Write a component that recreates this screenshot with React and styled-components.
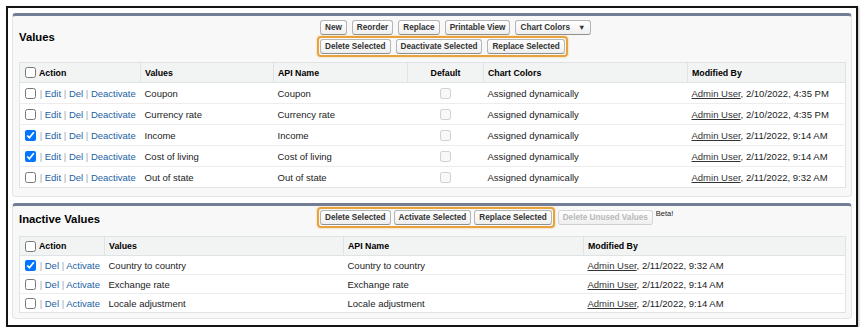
import styled, { createGlobalStyle } from 'styled-components';

const GlobalStyle = createGlobalStyle`
  body {
    margin: 0;
    background: #fff;
    font-family: "Liberation Sans", Arial, sans-serif;
    color: #222;
  }
`;

const activeRows = [
  { name: 'Coupon', checked: false, by: '2/10/2022, 4:35 PM' },
  { name: 'Currency rate', checked: false, by: '2/10/2022, 4:35 PM' },
  { name: 'Income', checked: true, by: '2/11/2022, 9:14 AM' },
  { name: 'Cost of living', checked: true, by: '2/11/2022, 9:14 AM' },
  { name: 'Out of state', checked: false, by: '2/11/2022, 9:32 AM' },
];

const inactiveRows = [
  { name: 'Country to country', checked: true, by: '2/11/2022, 9:32 AM' },
  { name: 'Exchange rate', checked: false, by: '2/11/2022, 9:14 AM' },
  { name: 'Locale adjustment', checked: false, by: '2/11/2022, 9:14 AM' },
];

const ModifiedBy = ({ when }) => (
  <>
    <UserLink>Admin User</UserLink>, {when}
  </>
);

const Actions = ({ checked, links }) => (
  <ActionCell>
    <Check type="checkbox" defaultChecked={checked} />
    {links.map(l => (
      <span key={l}>
        <Pipe> | </Pipe>
        <ActionLink>{l}</ActionLink>
      </span>
    ))}
  </ActionCell>
);

const App = () => {
  return (
    <Page>
      <GlobalStyle />
      <Frame>
        <Panel>
          <PanelHeader>
            <Title>Values</Title>
            <ButtonCell $pb={5}>
              <ButtonRow>
                <Btn>New</Btn>
                <Btn>Reorder</Btn>
                <Btn>Replace</Btn>
                <Btn>Printable View</Btn>
                <Btn>
                  Chart Colors<Caret>▼</Caret>
                </Btn>
              </ButtonRow>
              <Highlight $gap={5}>
                <Btn>Delete Selected</Btn>
                <Btn>Deactivate Selected</Btn>
                <Btn>Replace Selected</Btn>
              </Highlight>
            </ButtonCell>
          </PanelHeader>
          <PanelBody $pb={8}>
            <Table>
              <colgroup>
                <col style={{ width: 121 }} />
                <col style={{ width: 133 }} />
                <col style={{ width: 134 }} />
                <col style={{ width: 76 }} />
                <col style={{ width: 204 }} />
                <col style={{ width: 158 }} />
              </colgroup>
              <thead>
                <tr>
                  <Th>
                    <ActionCell>
                      <Check type="checkbox" />
                      <HeadLabel>Action</HeadLabel>
                    </ActionCell>
                  </Th>
                  <Th>Values</Th>
                  <Th>API Name</Th>
                  <Th $center>Default</Th>
                  <Th>Chart Colors</Th>
                  <Th>Modified By</Th>
                </tr>
              </thead>
              <tbody>
                {activeRows.map(r => (
                  <Tr key={r.name}>
                    <Td>
                      <Actions checked={r.checked} links={['Edit', 'Del', 'Deactivate']} />
                    </Td>
                    <Td>{r.name}</Td>
                    <Td>{r.name}</Td>
                    <Td $center>
                      <Check type="checkbox" disabled />
                    </Td>
                    <Td>Assigned dynamically</Td>
                    <Td>
                      <ModifiedBy when={r.by} />
                    </Td>
                  </Tr>
                ))}
              </tbody>
            </Table>
          </PanelBody>
        </Panel>

        <Panel>
          <PanelHeader>
            <Title>Inactive Values</Title>
            <ButtonCell $pb={8}>
              <InlineRow>
                <Highlight $gap={3}>
                  <Btn>Delete Selected</Btn>
                  <Btn>Activate Selected</Btn>
                  <Btn>Replace Selected</Btn>
                </Highlight>
                <Btn disabled>Delete Unused Values</Btn>
                <Beta>Beta!</Beta>
              </InlineRow>
            </ButtonCell>
          </PanelHeader>
          <PanelBody $pb={5}>
            <Table>
              <colgroup>
                <col style={{ width: 85 }} />
                <col style={{ width: 239 }} />
                <col style={{ width: 240 }} />
                <col style={{ width: 262 }} />
              </colgroup>
              <thead>
                <tr>
                  <Th $compact>
                    <ActionCell>
                      <Check type="checkbox" />
                      <HeadLabel>Action</HeadLabel>
                    </ActionCell>
                  </Th>
                  <Th $compact>Values</Th>
                  <Th $compact>API Name</Th>
                  <Th $compact>Modified By</Th>
                </tr>
              </thead>
              <tbody>
                {inactiveRows.map(r => (
                  <Tr key={r.name}>
                    <Td $compact>
                      <Actions checked={r.checked} links={['Del', 'Activate']} />
                    </Td>
                    <Td $compact>{r.name}</Td>
                    <Td $compact>{r.name}</Td>
                    <Td $compact>
                      <ModifiedBy when={r.by} />
                    </Td>
                  </Tr>
                ))}
              </tbody>
            </Table>
          </PanelBody>
        </Panel>
      </Frame>
    </Page>
  );
};

export default App;

const Page = styled.div`
  padding: 6px 0 0 6px;
`;

const Frame = styled.div`
  width: 852px;
  box-sizing: border-box;
  border: 2px solid #151515;
  padding: 5px 4px 6px 4px;
  background: #fff;
  box-shadow: 1px 1px 2px rgba(0, 0, 0, 0.25);
`;

const Panel = styled.div`
  background: #f8f8f8;
  border: 1px solid #e2e4e6;
  border-top: 3px solid #737d96;
  border-radius: 4px;
  & + & {
    margin-top: 6px;
  }
`;

const PanelHeader = styled.div`
  display: grid;
  grid-template-columns: 298px 1fr;
  align-items: center;
  padding-left: 6px;
`;

const Title = styled.h2`
  margin: 0 0 5px;
  font-size: 11.3px;
  font-weight: bold;
  color: #000;
`;

const ButtonCell = styled.div`
  display: flex;
  flex-direction: column;
  align-items: flex-start;
  padding: 1px 0 ${p => p.$pb}px;
`;

const ButtonRow = styled.div`
  display: flex;
  gap: 5px;
  padding: 3px 0 1px 3px;
`;

const InlineRow = styled.div`
  display: flex;
  align-items: center;
  gap: 3px;
`;

const Highlight = styled.div`
  display: inline-flex;
  gap: ${p => p.$gap}px;
  padding: 1px;
  border: 2px solid #e7a23c;
  border-radius: 4px;
  box-shadow: 0 0 2px rgba(231, 162, 60, 0.7);
`;

const Btn = styled.button`
  display: inline-flex;
  align-items: center;
  height: 15px;
  padding: 0 4px;
  margin: 0;
  font-family: "Liberation Sans", Arial, sans-serif;
  font-size: 8.2px;
  font-weight: bold;
  color: ${p => (p.disabled ? '#b9b9b9' : '#333')};
  background: linear-gradient(#ffffff, #efefef);
  border: 1px solid ${p => (p.disabled ? '#d6d6d6' : '#b5b5b5')};
  border-bottom-color: ${p => (p.disabled ? '#cfcfcf' : '#8f8f8f')};
  border-radius: 3px;
  white-space: nowrap;
`;

const Caret = styled.span`
  margin-left: 8px;
  font-size: 7.5px;
  color: #333;
`;

const Beta = styled.span`
  align-self: flex-start;
  margin-top: 2px;
  font-size: 7.5px;
  color: #222;
`;

const PanelBody = styled.div`
  padding: 0 6px ${p => p.$pb}px;
`;

const Table = styled.table`
  width: 100%;
  table-layout: fixed;
  border-collapse: collapse;
  background: #fff;
  border: 1px solid #e0e3e5;
`;

const Th = styled.th`
  height: ${p => (p.$compact ? 18 : 19)}px;
  padding: 0 4px;
  background: #f2f3f3;
  border-bottom: 1px solid #e0e3e5;
  border-left: 1px solid #e0e3e5;
  font-size: 8.8px;
  font-weight: bold;
  color: #000;
  text-align: ${p => (p.$center ? 'center' : 'left')};
  white-space: nowrap;
  &:first-child {
    border-left: none;
    padding-left: 5px;
  }
`;

const Tr = styled.tr`
  &:last-child td {
    border-bottom: none;
  }
`;

const Td = styled.td`
  height: ${p => (p.$compact ? 18 : 20)}px;
  padding: 0 4px;
  border-bottom: 1px solid #ededed;
  font-size: 9.5px;
  color: #222;
  text-align: ${p => (p.$center ? 'center' : 'left')};
  white-space: nowrap;
  vertical-align: middle;
  &:first-child {
    padding-left: 5px;
  }
`;

const ActionCell = styled.div`
  display: flex;
  align-items: center;
  white-space: pre;
`;

const Check = styled.input`
  width: 11px;
  height: 11px;
  margin: 0 1px 0 0;
  vertical-align: middle;
`;

const HeadLabel = styled.span`
  margin-left: 2px;
`;

const Pipe = styled.span`
  color: #9aa6b4;
`;

const ActionLink = styled.span`
  color: #1b5fa5;
`;

const UserLink = styled.span`
  color: #333;
  text-decoration: underline;
`;
